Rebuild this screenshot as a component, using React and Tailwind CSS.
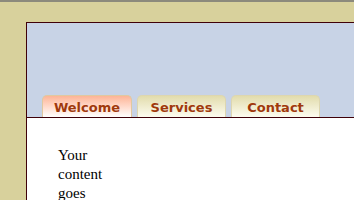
import React from 'react';

const tabs = [
  { label: 'Welcome', active: true },
  { label: 'Services' },
  { label: 'Contact' },
];

const App = () => {
  return (
    <div className="w-[354px] h-[200px] overflow-hidden bg-[#d8d19c] border-t-2 border-[#8c8a7c]">
      <div className="ml-[26px] mt-[20px] border-l border-t border-[#3f0008] bg-white">
        {/* header with tabs */}
        <div className="h-[95px] bg-[#c8d3e6] border-b border-[#3f0008] flex items-end pl-[15px] gap-[5px]">
          {tabs.map((tab) => (
            <div
              key={tab.label}
              className={
                tab.active
                  ? 'w-[90px] h-[22px] rounded-t-[5px] border border-b-0 border-[#e0c8a0] bg-gradient-to-b from-[#fcb496] to-[#ffffff] flex items-center justify-center'
                  : 'w-[89px] h-[22px] rounded-t-[5px] border border-b-0 border-[#ddd6b0] bg-gradient-to-b from-[#e2dcac] to-[#fdfcf0] flex items-center justify-center'
              }
            >
              <span
                className="text-[13px] font-bold text-[#a0390c] leading-none pt-[1px]"
                style={{ fontFamily: '"DejaVu Sans", Verdana, sans-serif' }}
              >
                {tab.label}
              </span>
            </div>
          ))}
        </div>

        {/* content */}
        <div className="pl-[31px] pt-[28px] pb-4">
          <p
            className="w-[60px] text-[15px] leading-[19px] text-black"
            style={{ fontFamily: '"Liberation Serif", "Times New Roman", serif' }}
          >
            Your content goes here.
          </p>
        </div>
      </div>
    </div>
  );
};

export default App;
